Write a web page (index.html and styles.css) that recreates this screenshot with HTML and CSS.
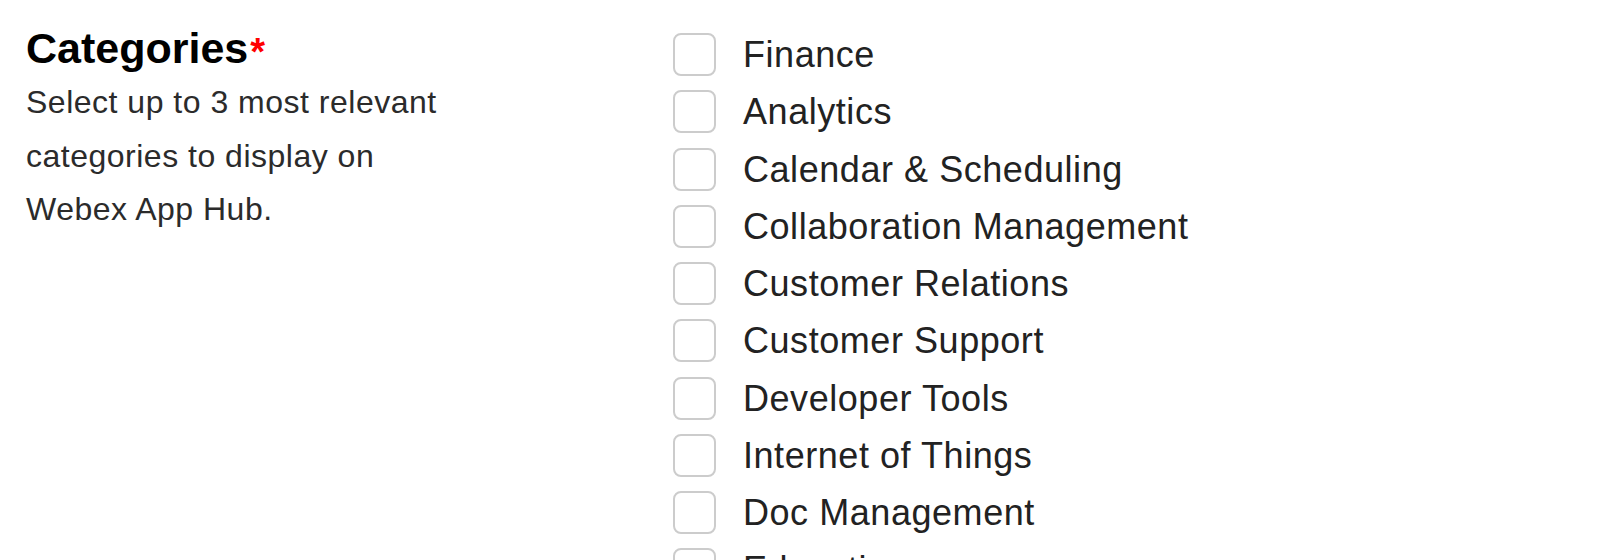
FILE: index.html
```html
<!DOCTYPE html>
<html lang="en">
<head>
<meta charset="utf-8">
<title>Categories</title>
<link rel="stylesheet" href="styles.css">
</head>
<body>
<div class="form-row">
  <div class="field-info">
    <h2 class="field-title">Categories<span class="required">*</span></h2>
    <p class="field-desc">Select up to 3 most relevant categories to display on Webex App Hub.</p>
  </div>
  <ul class="checklist">
    <li class="check-item"><span class="box"></span><span class="label">Finance</span></li>
    <li class="check-item"><span class="box"></span><span class="label">Analytics</span></li>
    <li class="check-item"><span class="box"></span><span class="label">Calendar &amp; Scheduling</span></li>
    <li class="check-item"><span class="box"></span><span class="label">Collaboration Management</span></li>
    <li class="check-item"><span class="box"></span><span class="label">Customer Relations</span></li>
    <li class="check-item"><span class="box"></span><span class="label">Customer Support</span></li>
    <li class="check-item"><span class="box"></span><span class="label">Developer Tools</span></li>
    <li class="check-item"><span class="box"></span><span class="label">Internet of Things</span></li>
    <li class="check-item"><span class="box"></span><span class="label">Doc Management</span></li>
    <li class="check-item"><span class="box"></span><span class="label">Education</span></li>
  </ul>
</div>
</body>
</html>
```
FILE: styles.css
```css
html, body {
  margin: 0;
  padding: 0;
  background: #ffffff;
}
body {
  font-family: "Liberation Sans", Arial, sans-serif;
  height: 560px;
  overflow: hidden;
}
.form-row {
  display: grid;
  grid-template-columns: 647px 1fr;
  padding-left: 26px;
}
.field-info {
  padding-top: 24px;
}
.field-title {
  margin: 0;
  font-size: 43px;
  line-height: 48px;
  font-weight: 700;
  letter-spacing: 0;
  color: #000000;
}
.required {
  color: #ff0000;
  font-size: 38px;
  vertical-align: -2px;
  margin-left: 2px;
}
.field-desc {
  margin: 0;
  width: 440px;
  font-size: 32px;
  line-height: 53.5px;
  letter-spacing: 0.5px;
  color: #2b2b2b;
}
.checklist {
  list-style: none;
  margin: 0;
  padding: 33px 0 0 0;
  display: flex;
  flex-direction: column;
  gap: 14.25px;
}
.check-item {
  display: flex;
  align-items: center;
  height: 43px;
  gap: 27px;
}
.box {
  flex: 0 0 auto;
  width: 43px;
  height: 43px;
  box-sizing: border-box;
  border: 2px solid #cccccc;
  border-radius: 8px;
  background: #ffffff;
}
.label {
  font-size: 36px;
  line-height: 43px;
  letter-spacing: 0.55px;
  color: #222222;
  white-space: nowrap;
}
```
